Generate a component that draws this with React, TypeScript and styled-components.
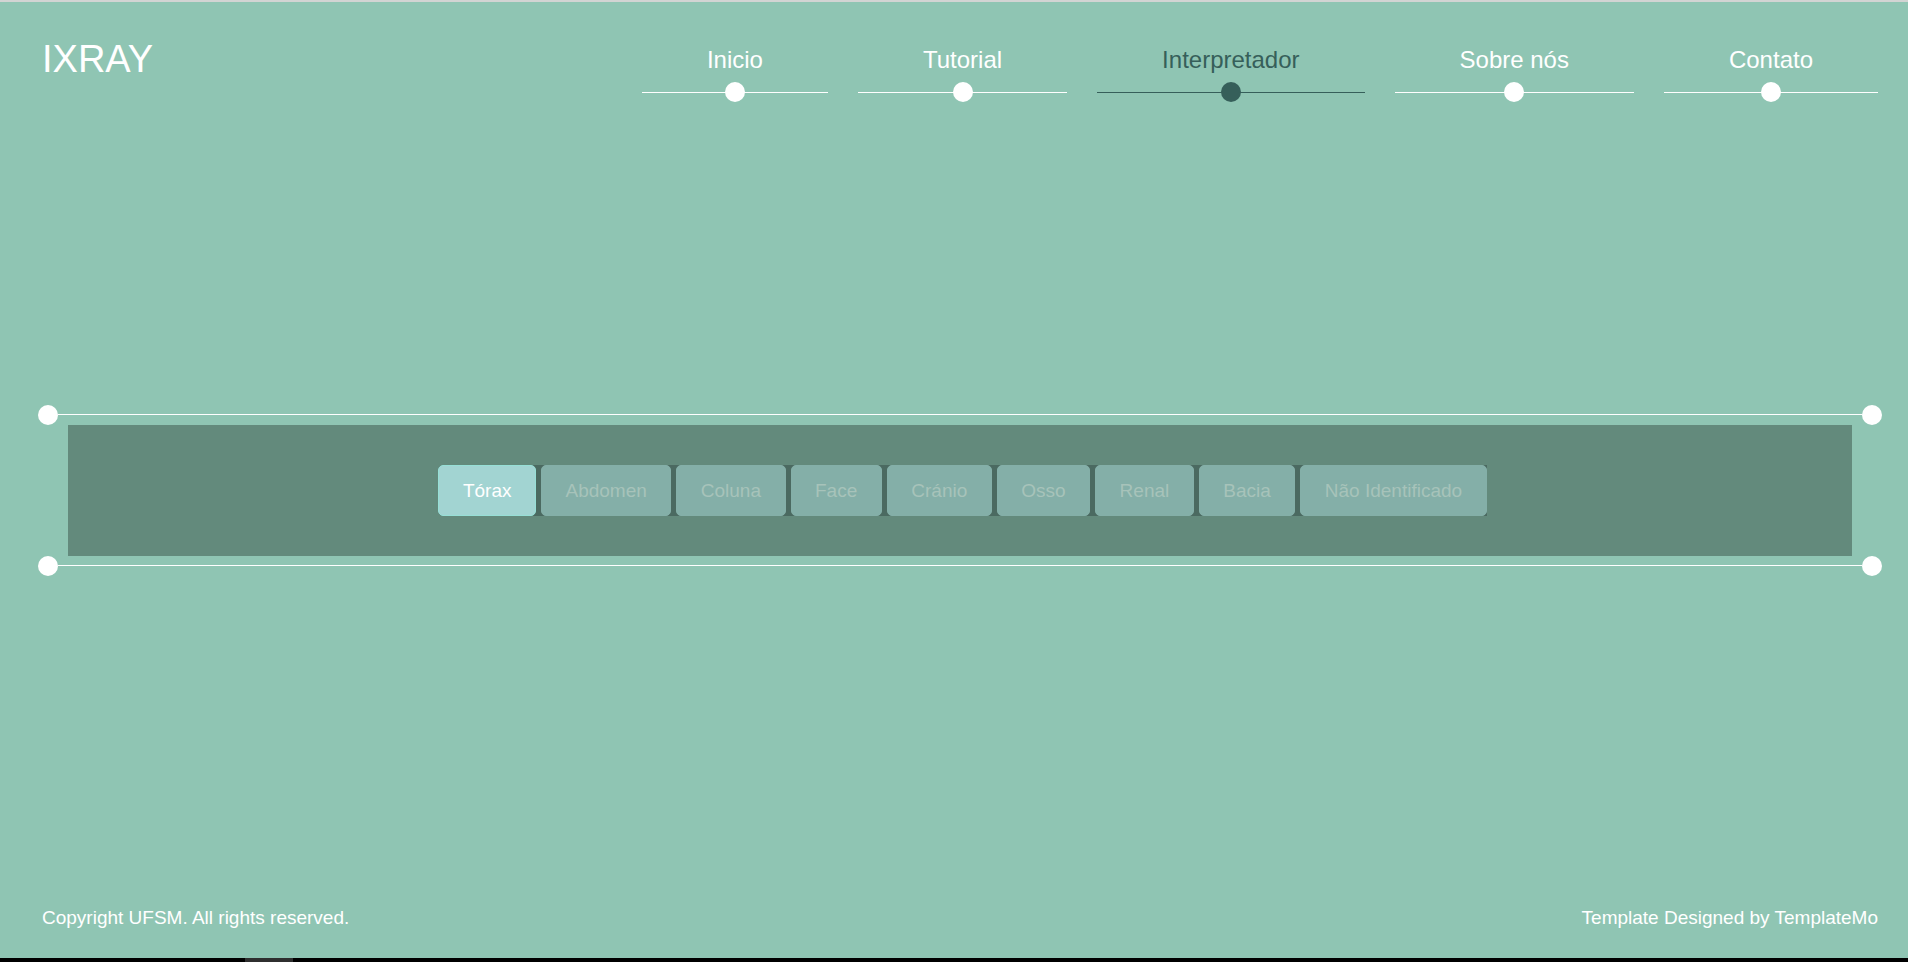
import React from 'react';
import styled, { createGlobalStyle } from 'styled-components';

const GlobalStyle = createGlobalStyle`
  html, body { margin: 0; padding: 0; }
  body {
    font-family: "Liberation Sans", Arial, sans-serif;
    background: #000;
  }
  * { box-sizing: border-box; }
`;

const Page = styled.div`
  min-height: 100vh;
  display: flex;
  flex-direction: column;
  background: #8fc5b3;
  border-top: 2px solid #d2d4d3;
`;

const Header = styled.header`
  display: flex;
  justify-content: space-between;
  align-items: flex-start;
  padding: 0 30px 0 42px;
`;

const Logo = styled.h1`
  margin: 36px 0 0;
  font-size: 38px;
  line-height: 42px;
  font-weight: 400;
  color: #fff;
`;

const Nav = styled.nav`
  display: flex;
  gap: 30px;
  margin-top: 44px;
`;

const NavItem = styled.a`
  display: flex;
  flex-direction: column;
  text-decoration: none;
  cursor: pointer;
`;

const NavLabel = styled.span<{ $active?: boolean }>`
  padding: 0 65px;
  text-align: center;
  font-size: 24px;
  line-height: 28px;
  color: ${(p) => (p.$active ? '#365f5a' : '#ffffff')};
  white-space: nowrap;
`;

const Track = styled.span<{ $active?: boolean }>`
  height: 20px;
  margin-top: 8px;
  display: flex;
  justify-content: center;
  background: linear-gradient(
    to bottom,
    transparent 10px,
    ${(p) => (p.$active ? '#365f5a' : '#ffffff')} 10px,
    ${(p) => (p.$active ? '#365f5a' : '#ffffff')} 11px,
    transparent 11px
  );
`;

const Dot = styled.span<{ $active?: boolean }>`
  width: 20px;
  height: 20px;
  border-radius: 50%;
  background: ${(p) => (p.$active ? '#365f5a' : '#ffffff')};
`;

const Main = styled.main`
  flex: 1;
`;

const Frame = styled.section`
  margin: 303px 26px 0 38px;
`;

const Rail = styled.div`
  display: flex;
  align-items: center;
  height: 20px;
`;

const Knob = styled.span`
  width: 20px;
  height: 20px;
  border-radius: 50%;
  background: #fff;
  flex: none;
`;

const RailLine = styled.span`
  flex: 1;
  height: 1px;
  margin-top: -1px;
  background: #fff;
`;

const Panel = styled.div`
  margin: 0 30px;
  background: #638a7c;
  padding: 40px 0;
  display: flex;
  justify-content: center;
`;

const Group = styled.div`
  display: flex;
  gap: 5px;
  margin-left: 5px;
  background: #4b6a61;
  border-radius: 5px 0 0 5px;
`;

const TypeButton = styled.button<{ $active?: boolean }>`
  font-family: "Liberation Sans", Arial, sans-serif;
  font-size: 19px;
  line-height: 27px;
  padding: 11px 23.5px;
  border-radius: 5px;
  border: 1px solid ${(p) => (p.$active ? '#97dfd6' : '#84afa8')};
  background: ${(p) => (p.$active ? '#a2d4d2' : '#84afa8')};
  color: ${(p) => (p.$active ? '#ffffff' : '#a7c3ba')};
  cursor: pointer;
  white-space: nowrap;
`;

const Footer = styled.footer`
  display: flex;
  justify-content: space-between;
  padding: 0 30px 29px 42px;
  font-size: 19px;
  line-height: 22px;
  color: #fff;
`;

const Strip = styled.div`
  height: 4px;
  background: #000;
  padding-left: 245px;
`;

const StripThumb = styled.div`
  width: 48px;
  height: 4px;
  background: #2f2f2f;
`;

const navItems = ['Inicio', 'Tutorial', 'Interpretador', 'Sobre nós', 'Contato'];
const types = ['Tórax', 'Abdomen', 'Coluna', 'Face', 'Cránio', 'Osso', 'Renal', 'Bacia', 'Não Identificado'];

export default function App() {
  return (
    <>
      <GlobalStyle />
      <Page>
        <Header>
          <Logo>IXRAY</Logo>
          <Nav>
            {navItems.map((n) => {
              const active = n === 'Interpretador';
              return (
                <NavItem key={n}>
                  <NavLabel $active={active}>{n}</NavLabel>
                  <Track $active={active}>
                    <Dot $active={active} />
                  </Track>
                </NavItem>
              );
            })}
          </Nav>
        </Header>
        <Main>
          <Frame>
            <Rail>
              <Knob />
              <RailLine />
              <Knob />
            </Rail>
            <Panel>
              <Group>
                {types.map((t, i) => (
                  <TypeButton key={t} $active={i === 0}>
                    {t}
                  </TypeButton>
                ))}
              </Group>
            </Panel>
            <Rail>
              <Knob />
              <RailLine />
              <Knob />
            </Rail>
          </Frame>
        </Main>
        <Footer>
          <span>Copyright UFSM. All rights reserved.</span>
          <span>Template Designed by TemplateMo</span>
        </Footer>
        <Strip>
          <StripThumb />
        </Strip>
      </Page>
    </>
  );
}
